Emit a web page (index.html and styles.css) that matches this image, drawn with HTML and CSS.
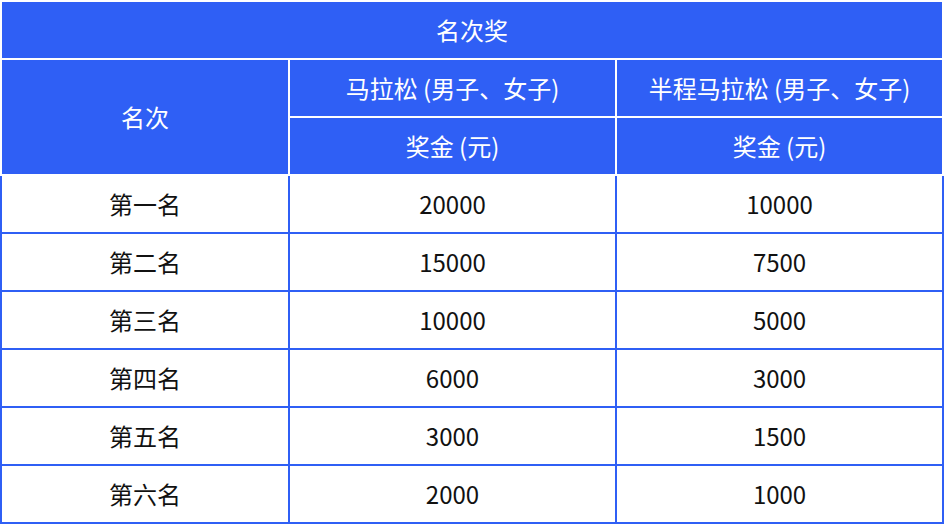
FILE: index.html
```html
<!DOCTYPE html>
<html lang="zh-CN">
<head>
<meta charset="utf-8">
<title>名次奖</title>
<link rel="stylesheet" href="styles.css">
</head>
<body>
<table class="prize">
  <colgroup>
    <col class="c1">
    <col class="c2">
    <col class="c3">
  </colgroup>
  <thead>
    <tr><th colspan="3">名次奖</th></tr>
    <tr><th rowspan="2">名次</th><th>马拉松 (男子、女子)</th><th>半程马拉松 (男子、女子)</th></tr>
    <tr><th>奖金 (元)</th><th>奖金 (元)</th></tr>
  </thead>
  <tbody>
    <tr><td>第一名</td><td>20000</td><td>10000</td></tr>
    <tr><td>第二名</td><td>15000</td><td>7500</td></tr>
    <tr><td>第三名</td><td>10000</td><td>5000</td></tr>
    <tr><td>第四名</td><td>6000</td><td>3000</td></tr>
    <tr><td>第五名</td><td>3000</td><td>1500</td></tr>
    <tr><td>第六名</td><td>2000</td><td>1000</td></tr>
  </tbody>
</table>
</body>
</html>
```
FILE: styles.css
```css
html, body {
  margin: 0;
  padding: 0;
  background: #ffffff;
}
body {
  font-family: "Noto Sans CJK SC", "Noto Sans", sans-serif;
  font-size: 24px;
  color: #111111;
}
.prize {
  width: 944px;
  border-collapse: collapse;
  table-layout: fixed;
}
.c1 { width: 288px; }
.c2 { width: 327px; }
.c3 { width: 327px; }
.prize th,
.prize td {
  height: 58px;
  padding: 0;
  text-align: center;
  vertical-align: middle;
  font-weight: normal;
  line-height: 1;
  box-sizing: border-box;
}
.prize th {
  background: #2f5ff5;
  color: #ffffff;
  border: 2px solid #ffffff;
}
.prize td {
  border: 2px solid #2f5ff5;
}
```
